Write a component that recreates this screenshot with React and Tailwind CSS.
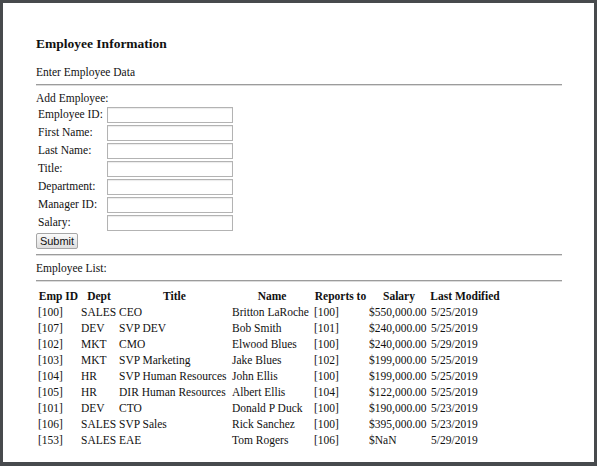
import React from 'react';

const fields = ['Employee ID:', 'First Name:', 'Last Name:', 'Title:', 'Department:', 'Manager ID:', 'Salary:'];

const employees = [
    ['[100]', 'SALES', 'CEO', 'Britton LaRoche', '[100]', '$550,000.00', '5/25/2019'],
    ['[107]', 'DEV', 'SVP DEV', 'Bob Smith', '[101]', '$240,000.00', '5/25/2019'],
    ['[102]', 'MKT', 'CMO', 'Elwood Blues', '[100]', '$240,000.00', '5/29/2019'],
    ['[103]', 'MKT', 'SVP Marketing', 'Jake Blues', '[102]', '$199,000.00', '5/25/2019'],
    ['[104]', 'HR', 'SVP Human Resources', 'John Ellis', '[100]', '$199,000.00', '5/25/2019'],
    ['[105]', 'HR', 'DIR Human Resources', 'Albert Ellis', '[104]', '$122,000.00', '5/25/2019'],
    ['[101]', 'DEV', 'CTO', 'Donald P Duck', '[100]', '$190,000.00', '5/23/2019'],
    ['[106]', 'SALES', 'SVP Sales', 'Rick Sanchez', '[100]', '$395,000.00', '5/23/2019'],
    ['[153]', 'SALES', 'EAE', 'Tom Rogers', '[106]', '$NaN', '5/29/2019'],
];

const headers = ['Emp ID', 'Dept', 'Title', 'Name', 'Reports to', 'Salary', 'Last Modified'];

function Rule() {
    return <div className="h-[2px] border-t border-[#9c9c9c] border-b border-b-[#dcdcdc]" />;
}

export default function App() {
    return (
        <div className="w-[597px] h-[466px] bg-[#474a4d] pt-[3px] pl-[3px] pr-[3px] pb-[4px]">
            <div className="h-full bg-white pl-[33px] pr-[32px] text-[11.5px] text-[#111] font-['Liberation_Serif',serif]">
                <h3 className="pt-[33px] h-[49px] leading-4 text-[13.5px] font-bold">Employee Information</h3>

                <p className="mt-3 h-4 leading-4">Enter Employee Data</p>
                <div className="mt-1"><Rule /></div>

                <p className="mt-[5px] h-[15px] leading-[15px]">Add Employee:</p>
                <form onSubmit={(e) => e.preventDefault()}>
                    {fields.map((f) => (
                        <div key={f} className="flex h-[18px] items-start pl-[2px]">
                            <label className="w-[69px] h-[18px] leading-[17px] whitespace-nowrap">{f}</label>
                            <input className="mt-px w-[126px] h-4 border border-[#b3b3b3] shadow-[inset_0_1px_1px_rgba(0,0,0,0.08)] bg-white outline-none" />
                        </div>
                    ))}
                    <button
                        type="submit"
                        className="mt-px h-4 w-[42px] border border-[#a6a6a6] rounded-[2px] bg-gradient-to-b from-[#fafafa] to-[#dedede] text-[11px] leading-[14px] text-[#111] font-['Liberation_Sans',Arial,sans-serif]"
                    >
                        Submit
                    </button>
                </form>

                <div className="mt-[4px]"><Rule /></div>
                <p className="mt-1 h-4 leading-4">Employee List:</p>
                <div className="mt-1"><Rule /></div>

                <table className="mt-[6px] ml-px table-fixed border-collapse">
                    <colgroup>
                        <col className="w-[43px]" />
                        <col className="w-[38px]" />
                        <col className="w-[113px]" />
                        <col className="w-[82px]" />
                        <col className="w-[55px]" />
                        <col className="w-[62px]" />
                        <col className="w-[70px]" />
                    </colgroup>
                    <thead>
                        <tr className="h-4">
                            {headers.map((h) => (
                                <th key={h} className="p-0 text-center font-bold leading-4 whitespace-nowrap">{h}</th>
                            ))}
                        </tr>
                    </thead>
                    <tbody>
                        {employees.map((row, i) => (
                            <tr key={i} className="h-4">
                                {row.map((c, j) => (
                                    <td key={j} className="p-0 pl-px leading-4 whitespace-nowrap overflow-visible">{c}</td>
                                ))}
                            </tr>
                        ))}
                    </tbody>
                </table>
            </div>
        </div>
    );
}
